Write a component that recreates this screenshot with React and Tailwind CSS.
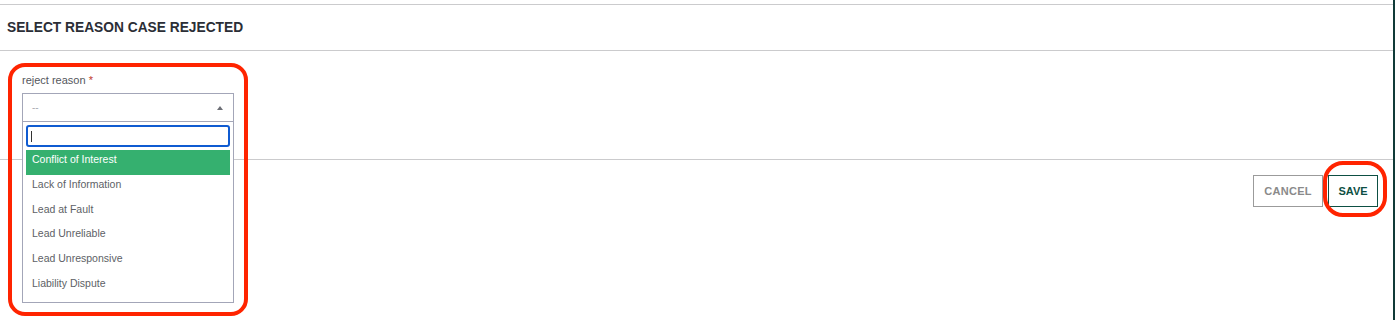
import React from 'react';

const REASONS = [
  'Conflict of Interest',
  'Lack of Information',
  'Lead at Fault',
  'Lead Unreliable',
  'Lead Unresponsive',
  'Liability Dispute',
];

const App = () => {
  return (
    <div className="relative w-[1395px] h-[320px] bg-white flex overflow-hidden font-['Liberation_Sans',Arial,sans-serif]">
      <div className="w-[1393px] flex flex-col">
        <div className="h-[4px]" />

        {/* Header */}
        <div className="h-[47px] border-t border-b border-[#cbcbcd] px-[7px] flex items-center">
          <h2 className="text-[13.75px] font-bold text-[#2b2e36] leading-none">SELECT REASON CASE REJECTED</h2>
        </div>

        {/* Body */}
        <div className="h-[108px] px-[22px] pt-[22px] relative z-10">
          <label className="block text-[11px] leading-[14px] text-[#55575d] mb-[6px]">
            reject reason <span className="text-[#c0392b]">*</span>
          </label>
          <div className="relative w-[212px]">
            <div className="h-[29px] border border-[#a3a6b8] bg-white flex items-center justify-between pl-[9px] pr-[10px]">
              <span className="text-[10px] text-[#a9abb3]">--</span>
              <span className="w-0 h-0 border-l-[3.5px] border-r-[3.5px] border-b-[4px] border-l-transparent border-r-transparent border-b-[#6c6e75]" />
            </div>

            {/* Open dropdown */}
            <div className="absolute left-0 top-[28px] w-[212px] h-[182px] border border-[#a3a6b8] bg-white px-[3px] pt-[3px]">
              <div className="h-[22px] border-2 border-[#0f5bd1] rounded-[3px] flex items-center pl-[3px]">
                <span className="w-px h-[11px] bg-[#333]" />
              </div>
              <ul className="mt-[3px]">
                {REASONS.map((r, i) => (
                  <li
                    key={r}
                    className={`h-[24.8px] flex items-center pl-[6px] pb-[5px] text-[10.5px] ${
                      i === 0 ? 'bg-[#35b06f] text-white' : 'text-[#5d5f66]'
                    }`}
                  >
                    {r}
                  </li>
                ))}
              </ul>
            </div>
          </div>
        </div>

        {/* Footer */}
        <div className="flex-1 border-t border-[#cbcbcd] flex justify-end items-start pt-[15px] pr-[15px] gap-[5px]">
          <button className="w-[70px] h-[32px] border border-[#9b9b9b] text-[11px] font-bold tracking-[0.3px] text-[#8a8a8a] bg-white">
            CANCEL
          </button>
          <button className="w-[50px] h-[32px] border border-[#0d4f43] text-[11px] font-bold text-[#0d4f43] bg-white">
            SAVE
          </button>
        </div>
      </div>
      <div className="w-[2px] bg-[#103a38]" />

      {/* Red annotation marks */}
      <div className="absolute left-[8px] top-[63px] w-[240px] h-[253px] border-[4.5px] border-[#ff2400] rounded-[17px] pointer-events-none z-20" />
      <div className="absolute left-[1323px] top-[161px] w-[64px] h-[56px] border-[4.5px] border-[#ff2400] rounded-[20px] pointer-events-none z-20" />
    </div>
  );
};

export default App;
